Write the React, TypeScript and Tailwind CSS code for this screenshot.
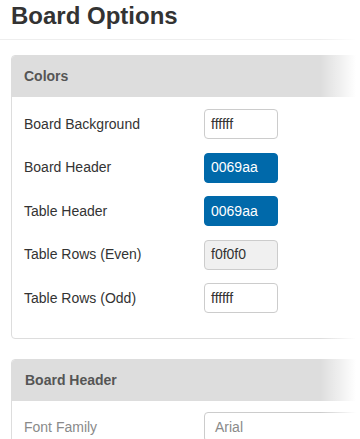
import React from "react";

const font = { fontFamily: '"Liberation Sans", Arial, sans-serif' };

function Row({ label, value, kind }: { label: string; value: string; kind: "white" | "blue" | "gray" }) {
  const cls =
    kind === "blue"
      ? "bg-[#0069aa] border-[#0069aa] text-white"
      : kind === "gray"
      ? "bg-[#f0f0f0] border-[#cccccc] text-[#333333]"
      : "bg-white border-[#cccccc] text-[#333333]";
  return (
    <div className="flex items-center h-[30px]">
      <div className="w-[180px] text-[14px] text-[#333333]">{label}</div>
      <div className={`w-[74px] h-[30px] border rounded-[4px] pl-[6px] flex items-center text-[14px] ${cls}`}>{value}</div>
    </div>
  );
}

export default function App() {
  return (
    <div className="relative w-[360px] h-[439px] overflow-hidden bg-white" style={font}>
      <div className="pl-[11px] pt-[1px] h-[40px] border-b border-[#eeeeee]">
        <h2 className="text-[24px] font-bold text-[#333333] leading-[30px]">Board Options</h2>
      </div>
      <div className="w-[420px] ml-[11px] mt-[15px] border border-[#dddddd] rounded-[4px]">
        <div className="h-[41px] bg-[#dddddd] rounded-t-[3px] flex items-center pl-[12px] text-[14px] font-bold text-[#555555]">Colors</div>
        <div className="pl-[12px] pt-[12px] pb-[25px] flex flex-col gap-[13.5px]">
          <Row label="Board Background" value="ffffff" kind="white" />
          <Row label="Board Header" value="0069aa" kind="blue" />
          <Row label="Table Header" value="0069aa" kind="blue" />
          <Row label="Table Rows (Even)" value="f0f0f0" kind="gray" />
          <Row label="Table Rows (Odd)" value="ffffff" kind="white" />
        </div>
      </div>
      <div className="w-[420px] ml-[11px] mt-[20px] border border-[#dddddd] rounded-[4px]">
        <div className="h-[41px] bg-[#dddddd] rounded-t-[3px] flex items-center pl-[13px] text-[14px] font-bold text-[#555555]">Board Header</div>
        <div className="pl-[12px] pt-[11px]">
          <div className="flex items-center h-[30px]">
            <div className="w-[180px] text-[14px] text-[#8a8a8a]">Font Family</div>
            <div className="w-[200px] h-[30px] border border-[#cccccc] rounded-[4px] pl-[10px] flex items-center text-[14px] text-[#8a8a8a]">Arial</div>
          </div>
        </div>
      </div>
      <div className="absolute top-0 right-0 w-[40px] h-full bg-gradient-to-r from-white/0 to-white to-90%" />
    </div>
  );
}
